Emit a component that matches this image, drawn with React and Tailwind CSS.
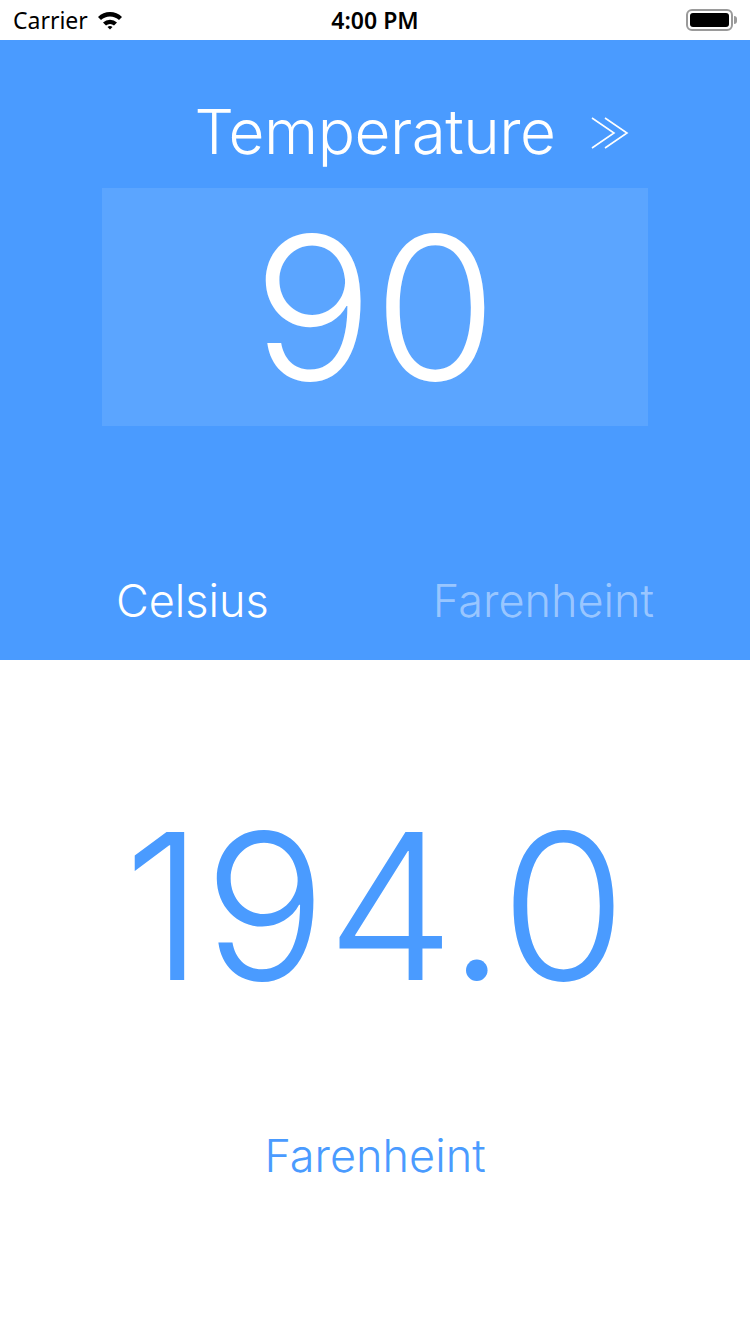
import React, { useState } from 'react';

const font = { fontFamily: 'Inter, "Noto Sans", sans-serif' };

const StatusBar = () => (
  <div className="h-10 bg-white flex items-center justify-between px-[13px] text-black relative" style={{ fontFamily: '"Noto Sans", Inter, sans-serif' }}>
    <div className="flex items-center gap-2 text-[23px]">
      <span>Carrier</span>
      <svg width="28" height="20" viewBox="0 0 28 20">
        <path d="M2 7 A17 17 0 0 1 26 7 L23 10 A13 13 0 0 0 5 10 Z" fill="#000" />
        <path d="M7 12.5 A10 10 0 0 1 21 12.5 L18 15.5 A6 6 0 0 0 10 15.5 Z" fill="#000" />
        <path d="M11.5 17 A4 4 0 0 1 16.5 17 L14 19.5 Z" fill="#000" />
      </svg>
    </div>
    <span className="absolute left-1/2 -translate-x-1/2 text-[23px] font-semibold">4:00 PM</span>
    <div className="flex items-center">
      <div className="w-[47px] h-[22px] rounded-[6px] border-2 border-[#9a9a9a] p-[2px]">
        <div className="w-full h-full bg-black rounded-[3px]" />
      </div>
      <div className="w-[3px] h-[8px] bg-[#9a9a9a] rounded-r-sm ml-[1px]" />
    </div>
  </div>
);

const Chevrons = () => (
  <svg width="42" height="36" viewBox="0 0 42 36" fill="none" stroke="#fff" strokeWidth="1.6">
    <path d="M3 3 L25 18 L3 33" />
    <path d="M16 3 L38 18 L16 33" />
  </svg>
);

export default function App() {
  const [celsius] = useState(90);
  const far = (celsius * 1.8 + 32).toFixed(1);

  return (
    <div className="w-[750px] h-[1334px] bg-white overflow-hidden" style={font}>
      <StatusBar />
      <div className="bg-[#4a9bff] h-[620px] flex flex-col">
        <div className="grid grid-cols-[1fr_auto_1fr] items-start pt-[61px] h-[148px]">
          <div />
          <h1 className="text-white text-[62px] font-light leading-none tracking-[-0.5px]">Temperature</h1>
          <div className="pl-[34px] pt-[14px]">
            <Chevrons />
          </div>
        </div>
        <div className="mx-[102px] h-[238px] bg-[#5ba5ff] flex items-center justify-center">
          <span className="text-white text-[200px] font-light leading-none">{celsius}</span>
        </div>
        <div className="flex justify-between pl-[116px] pr-[96px] mt-[152px]">
          <span className="text-white text-[45px] font-light leading-none">Celsius</span>
          <span className="text-white/45 text-[45px] font-light leading-none">Farenheint</span>
        </div>
      </div>
      <div className="flex flex-col items-center">
        <span className="text-[#4a9bff] text-[204px] font-light leading-none mt-[144px]">{far}</span>
        <span className="text-[#4a9bff] text-[45px] font-light leading-none mt-[125px]">Farenheint</span>
      </div>
    </div>
  );
}
